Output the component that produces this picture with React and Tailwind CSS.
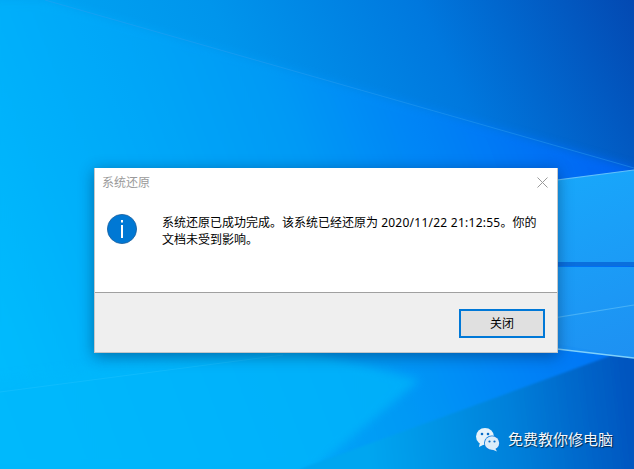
const cjk = '[font-family:"Noto_Sans","Noto_Sans_CJK_SC",sans-serif]';

function Wallpaper() {
  return (
    <svg className="absolute inset-0" width="634" height="469" viewBox="0 0 634 469">
      <defs>
        <linearGradient id="bg" gradientUnits="userSpaceOnUse" x1="0" y1="300" x2="634" y2="0">
          <stop offset="0" stopColor="#00b2f8" />
          <stop offset="0.45" stopColor="#0095ec" />
          <stop offset="0.72" stopColor="#0078de" />
          <stop offset="1" stopColor="#0349b2" />
        </linearGradient>
        <linearGradient id="low" gradientUnits="userSpaceOnUse" x1="0" y1="420" x2="634" y2="180">
          <stop offset="0" stopColor="#00c0ff" />
          <stop offset="0.55" stopColor="#009cf8" />
          <stop offset="1" stopColor="#0064ff" />
        </linearGradient>
        <linearGradient id="corner" gradientUnits="userSpaceOnUse" x1="370" y1="469" x2="634" y2="440">
          <stop offset="0" stopColor="#00a6f0" />
          <stop offset="0.55" stopColor="#0580da" />
          <stop offset="1" stopColor="#0455bf" />
        </linearGradient>
        <linearGradient id="pane" gradientUnits="userSpaceOnUse" x1="558" y1="170" x2="634" y2="360">
          <stop offset="0" stopColor="#18a8fb" />
          <stop offset="1" stopColor="#1e90f2" />
        </linearGradient>
        <filter id="soft"><feGaussianBlur stdDeviation="1.2" /></filter>
        <filter id="softer"><feGaussianBlur stdDeviation="5" /></filter>
      </defs>
      <rect width="634" height="469" fill="url(#bg)" />
      <polygon points="45,0 634,168 634,370 370,469 -10,469 -10,0" fill="url(#low)" opacity="0.8" filter="url(#softer)" />
      <polygon points="-10,380 283,345 420,380 300,480 -10,480" fill="#00b8fc" opacity="0.7" filter="url(#softer)" />
      <polygon points="300,469 640,345 640,480 300,480" fill="url(#corner)" filter="url(#soft)" />
      <polygon points="480,190 634,170 634,262 480,262" fill="url(#pane)" />
      <polygon points="480,330 634,305 634,358 480,340" fill="url(#pane)" opacity="0.9" />
      <polygon points="480,267 634,267 634,358 480,330" fill="url(#pane)" />
      <rect x="480" y="262" width="154" height="4" fill="#0a6fdd" />
      <line x1="45" y1="0" x2="634" y2="168" stroke="#2f9ff0" strokeWidth="1" opacity="0.45" />
      <line x1="480" y1="190" x2="634" y2="170" stroke="#62c0fa" strokeWidth="1.2" />
      <line x1="480" y1="330" x2="634" y2="305" stroke="#52b8f8" strokeWidth="1.2" opacity="0.8" />
      <line x1="480" y1="340" x2="634" y2="358" stroke="#7ed0fb" strokeWidth="1.4" />
      <line x1="0" y1="392" x2="283" y2="355" stroke="#30c8ff" strokeWidth="1" opacity="0.3" />
    </svg>
  );
}

function WeChatIcon() {
  return (
    <svg width="26" height="25" viewBox="0 0 26 25" className="shrink-0">
      <ellipse cx="10" cy="9.5" rx="9" ry="8.5" fill="#e6f2fb" />
      <polygon points="5,15 4,20 10,17" fill="#e6f2fb" />
      <ellipse cx="17" cy="16" rx="8" ry="7.5" fill="#0b78da" />
      <ellipse cx="17" cy="16" rx="7.2" ry="6.8" fill="#dcecf9" />
      <polygon points="20,21 22,24.5 16,22" fill="#dcecf9" />
      <circle cx="7" cy="7" r="1.3" fill="#0a6cc8" />
      <circle cx="13" cy="7" r="1.3" fill="#0a6cc8" />
      <circle cx="14.5" cy="14.5" r="1.1" fill="#0a6cc8" />
      <circle cx="19.5" cy="14.5" r="1.1" fill="#0a6cc8" />
    </svg>
  );
}

function InfoIcon() {
  return (
    <svg width="30" height="30" viewBox="0 0 30 30" className="shrink-0">
      <circle cx="15" cy="15" r="14.6" fill="#0078d4" stroke="#1a5f9e" strokeWidth="0.8" />
      <rect x="14" y="11" width="2" height="13" fill="#fff" />
      <rect x="14" y="6" width="2" height="2.5" fill="#fff" />
    </svg>
  );
}

export default function App() {
  return (
    <div className={`relative w-[634px] h-[469px] overflow-hidden flex flex-col ${cjk}`}>
      <Wallpaper />

      <div className="relative mt-[168px] ml-[94px] w-[464px] h-[185px] flex flex-col bg-white shadow-[0_3px_14px_rgba(0,30,70,0.45)] border-l border-b border-r border-[#8a8f94]/50">
        <div className="h-[29px] flex items-center justify-between pl-[7px] pr-[9px]">
          <span className="text-[12px] text-[#9a9a9a]">系统还原</span>
          <svg width="11" height="11" viewBox="0 0 11 11">
            <path d="M0.5 0.5 L10.5 10.5 M10.5 0.5 L0.5 10.5" stroke="#9a9a9a" strokeWidth="1" fill="none" />
          </svg>
        </div>
        <div className="h-[95px] flex items-start pl-[12px] pt-[17px] pr-[20px]">
          <InfoIcon />
          <p className="ml-[25px] text-[12px] leading-[17px] text-black">
            系统还原已成功完成。该系统已经还原为 <span className="tracking-[0.25px]">2020/11/22 21:12:55</span>。你的文档未受到影响。
          </p>
        </div>
        <div className="flex-1 bg-[#efefef] border-t border-[#a0a0a0] flex justify-end items-start pt-[16px] pr-[12px]">
          <button className="w-[86px] h-[29px] bg-[#e0e0e0] border-[2px] border-[#0078d7] text-[12px] text-black">
            关闭
          </button>
        </div>
      </div>

      <div className="absolute left-[475px] top-[427px] flex items-center gap-[7px]">
        <WeChatIcon />
        <span className="text-[15px] text-[#f4f8fd] [text-shadow:1px_1px_1px_rgba(0,0,0,0.65)]">免费教你修电脑</span>
      </div>
    </div>
  );
}
